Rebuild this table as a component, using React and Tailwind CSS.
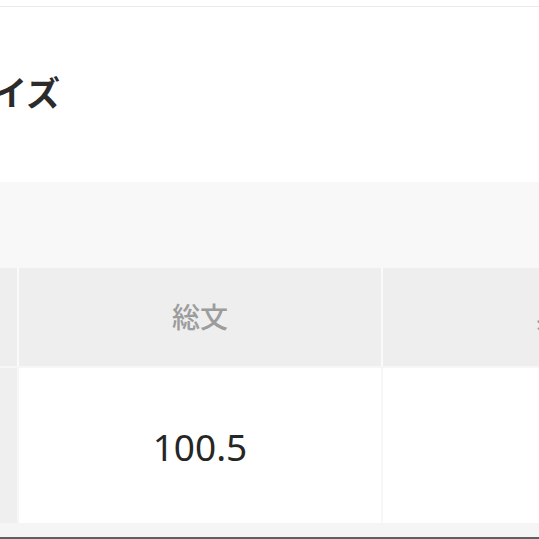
import React from 'react';

const jp = { fontFamily: '"Noto Sans", "Noto Sans CJK JP", sans-serif' };

export default function App() {
  return (
    <div className="w-[539px] h-[539px] overflow-hidden bg-white flex flex-col" style={jp}>
      {/* top divider */}
      <div className="h-[6px] shrink-0" />
      <div className="h-[1px] shrink-0 bg-[#ebebeb]" />

      {/* section title */}
      <div className="h-[175px] shrink-0 pt-[65px]">
        <h2 className="ml-[-41px] whitespace-nowrap text-[34px] leading-[42px] font-bold text-[#2b2b2b]">サイズ</h2>
      </div>

      {/* tab band */}
      <div className="h-[86px] shrink-0 bg-[#f8f8f8]" />

      {/* size table */}
      <div className="flex h-[98px] shrink-0 gap-[2px] bg-[#fafafa]">
        <div className="w-[17px] shrink-0 bg-[#eeeeee]" />
        <div className="w-[362px] shrink-0 bg-[#eeeeee] flex items-center justify-center text-[28px] font-medium text-[#9c9c9c]">総文</div>
        <div className="w-[362px] shrink-0 bg-[#eeeeee] flex items-center justify-center text-[28px] font-medium text-[#9c9c9c]">身幅</div>
      </div>
      <div className="flex h-[157px] shrink-0 gap-[2px] bg-[#f6f6f6] pt-[2px]">
        <div className="w-[17px] shrink-0 bg-[#efefef]" />
        <div className="w-[362px] shrink-0 bg-white flex items-center justify-center pt-[2px] text-[37px] text-[#262626]">100.5</div>
        <div className="w-[362px] shrink-0 bg-white flex items-center justify-center pt-[2px] text-[37px] text-[#262626]">52</div>
      </div>
      <div className="h-[14px] shrink-0 bg-[#f5f5f5]" />
      <div className="flex-1 bg-[#606060]" />
    </div>
  );
}
